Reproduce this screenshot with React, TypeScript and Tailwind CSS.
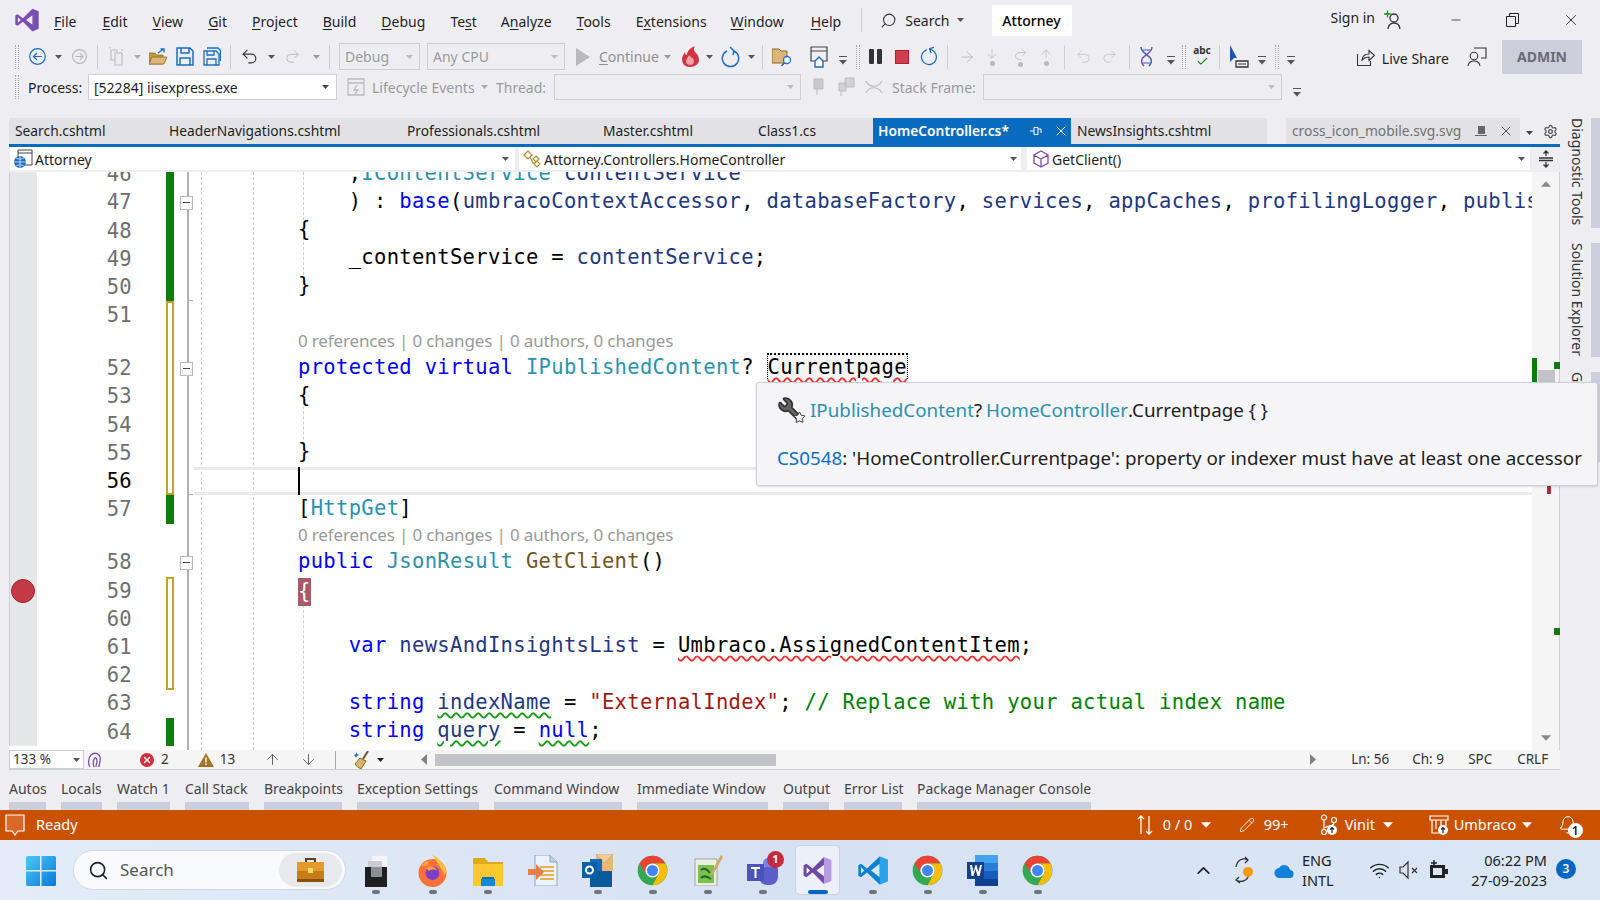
import { ArrowDown, ArrowRight, ArrowUp, ChevronUp, Check, Settings, Undo2, Redo2, RotateCw, Wifi, Search, Pencil, Bell, Wrench, Star, X, Minus } from "lucide-react";
import type { ReactNode } from "react";

const K = "text-[#0000ff]";
const T = "text-[#2b91af]";
const V = "text-[#1f377f]";
const M = "text-[#74531f]";
const S = "text-[#a31515]";
const C = "text-[#008000]";
const red = "underline decoration-wavy decoration-[#f03030] decoration-[1.5px] underline-offset-[3px]";
const green = "underline decoration-wavy decoration-[#1a9a1a] decoration-[1.5px] underline-offset-[3px]";

function Tri({ className = "ml-[8px]", color = "#555" }: { className?: string; color?: string }) {
  return (
    <svg width="7" height="4" viewBox="0 0 7 4" className={`shrink-0 ${className}`}>
      <path d="M0 0h7L3.5 4z" fill={color} />
    </svg>
  );
}

function Sep({ className = "" }: { className?: string }) {
  return <div className={`h-[24px] w-[1px] shrink-0 bg-[#ccced8] ${className}`} />;
}

function Grip({ className = "" }: { className?: string }) {
  return <div className={`h-[24px] w-[4px] shrink-0 border-x border-dotted border-[#a8a8b0] ${className}`} />;
}

function Overflow({ className = "" }: { className?: string }) {
  return (
    <svg width="8" height="10" viewBox="0 0 8 10" className={`shrink-0 ${className}`}>
      <path d="M0 1h8v1H0z" fill="#555" />
      <path d="M0 5h8L4 9.5z" fill="#555" />
    </svg>
  );
}

function VsLogo({ size = 26 }: { size?: number }) {
  return (
    <svg width={size} height={size} viewBox="0 0 24 24">
      <path fillRule="evenodd" fill="#7a4fb0" d="M17 1.5 8.2 10.4 3.4 6.8 1.2 7.900v8.200l2.200 1.100 4.800-3.600 8.800 8.900 5.800-2.400V3.900L17 1.500zM3.600 9.400 6.200 12l-2.600 2.600V9.400zM17 7.600v8.800L11.200 12 17 7.600z" />
    </svg>
  );
}

function MenuBar() {
  const items: [string, string, string, string][] = [
    ["", "F", "ile", "ml-[14px]"],
    ["", "E", "dit", "ml-[26px]"],
    ["", "V", "iew", "ml-[25px]"],
    ["", "G", "it", "ml-[25px]"],
    ["", "P", "roject", "ml-[25px]"],
    ["", "B", "uild", "ml-[25px]"],
    ["", "D", "ebug", "ml-[25px]"],
    ["Te", "s", "t", "ml-[25px]"],
    ["A", "n", "alyze", "ml-[24px]"],
    ["", "T", "ools", "ml-[25px]"],
    ["E", "x", "tensions", "ml-[25px]"],
    ["", "W", "indow", "ml-[24px]"],
    ["", "H", "elp", "ml-[27px]"],
  ];
  return (
    <div className="flex h-[40px] items-center pl-[14px] text-[14px] text-[#1e1e1e]">
      <VsLogo />
      {items.map(([a, u, b, m]) => (
        <span key={u + b} className={`${m} pt-[2px]`}>
          {a}
          <u className="underline-offset-2">{u}</u>
          {b}
        </span>
      ))}
      <Sep className="ml-[20px]" />
      <Search size={17} strokeWidth={1.5} className="ml-[18px] -scale-x-100 text-[#333]" />
      <span className="ml-[8px]">Search</span>
      <Tri className="ml-[7px]" />
      <div className="ml-[28px] flex h-[31px] w-[80px] items-center justify-center bg-white font-medium text-black">Attorney</div>
      <span className="ml-[259px] -mt-[6px]">Sign in</span>
      <svg width="20" height="20" viewBox="0 0 20 20" className="ml-[8px]" fill="none" stroke="#333" strokeWidth="1.3">
        <path d="M1 4h7M4.500 .5v7" stroke="#1a8a1a" />
        <circle cx="11" cy="8" r="4" />
        <path d="M5 19c.5-4 3-6 6-6s5.500 2 6 6" />
      </svg>
      <Minus size={14} strokeWidth={1.3} className="ml-[46px] text-[#222]" />
      <svg width="13" height="14" viewBox="0 0 13 14" className="ml-[43px]" fill="none" stroke="#222">
        <path d="M.5 3.500h9v10h-9zM3.500 3.500v-3h9v10h-3" />
      </svg>
      <X size={18} strokeWidth={1.2} className="ml-[43px] text-[#222]" />
    </div>
  );
}

function ToolbarOne() {
  return (
    <div className="flex h-[33px] items-center pl-[15px] text-[14px]">
      <Grip />
      <svg width="17" height="17" viewBox="0 0 17 17" className="ml-[10px] shrink-0" fill="none" stroke="#1c6dc4" strokeWidth="1.2">
        <circle cx="8.500" cy="8.500" r="7.800" />
        <path d="M13 8.500H4.500M8 5 4.500 8.500 8 12" />
      </svg>
      <Tri className="ml-[9px]" />
      <svg width="15" height="15" viewBox="0 0 17 17" className="ml-[10px] shrink-0" fill="none" stroke="#b4b4b8" strokeWidth="1.200">
        <circle cx="8.500" cy="8.500" r="7.800" />
        <path d="M4 8.500h8.500M9 5l3.500 3.500L9 12" />
      </svg>
      <Sep className="ml-[10px]" />
      <svg width="19" height="19" viewBox="0 0 19 19" className="ml-[10px] shrink-0" fill="none" stroke="#c0c0c4" strokeWidth="1.200">
        <path d="M7 6h7v12H7zM3 3h6v3M3 3v10h4M1 1h2M14 2v2" />
      </svg>
      <Tri className="ml-[7px]" color="#aaa" />
      <svg width="18" height="18" viewBox="0 0 18 18" className="ml-[8px] shrink-0">
        <path d="M0 5h6l1.500 2H14v9H0z" fill="#c59a3c" stroke="#8a6a20" strokeWidth=".8" />
        <path d="M3 9h15l-3 7H0z" fill="#dcb67a" stroke="#8a6a20" strokeWidth=".8" />
        <path d="M9 5 14 1.500M11.500 1H15v3.500" fill="none" stroke="#1c6dc4" strokeWidth="1.400" />
      </svg>
      <svg width="18" height="19" viewBox="0 0 18 19" className="ml-[9px] shrink-0" fill="none" stroke="#1c6dc4" strokeWidth="1.500">
        <path d="M1 1h13l3 3v14H1zM5 1v5h8V1M4 18v-7h10v7" />
      </svg>
      <svg width="18" height="19" viewBox="0 0 18 19" className="ml-[9px] shrink-0" fill="none" stroke="#1c6dc4" strokeWidth="1.300">
        <path d="M1 4h12l3 3v11H1zM4 4v4h7V4M4 18v-6h9v6M4 1h11l2.500 2.500V14" />
      </svg>
      <Sep className="ml-[9px]" />
      <Undo2 size={19} strokeWidth={1.4} className="ml-[9px] shrink-0 text-[#333]" />
      <Tri className="ml-[9px]" />
      <Redo2 size={17} strokeWidth={1.4} className="ml-[9px] shrink-0 text-[#bbb]" />
      <Tri className="ml-[12px]" color="#999" />
      <Sep className="ml-[9px]" />
      <div className="ml-[9px] flex h-[27px] w-[81px] shrink-0 items-center justify-between border border-[#ccced8] pl-[5px] pr-[6px] text-[#9a9a9a]">
        Debug
        <Tri className="" color="#bbb" />
      </div>
      <div className="ml-[7px] flex h-[27px] w-[138px] shrink-0 items-center justify-between border border-[#ccced8] pl-[5px] pr-[6px] text-[#9a9a9a]">
        Any CPU
        <Tri className="" color="#bbb" />
      </div>
      <svg width="14" height="18" viewBox="0 0 14 18" className="ml-[11px] shrink-0">
        <path d="M0 0l14 9-14 9z" fill="#b9b9bd" />
      </svg>
      <span className="ml-[9px] w-[59px] shrink-0 whitespace-nowrap text-[#8f8f8f]">
        <u className="underline-offset-2">C</u>ontinue
      </span>
      <Tri className="ml-[6px]" color="#999" />
      <svg width="19" height="22" viewBox="0 0 19 22" className="ml-[10px] shrink-0">
        <path d="M9 21c-5 0-8-3-8-8 0-3 2-5 3-7 0 2 1 3 2 3 0-4 3-7 8-9-2 3-1 5 1 7 2 2 3 4 3 7 0 4-4 7-9 7z" fill="#d4343f" />
        <path d="M9 19c-2 0-4-1.500-4-4s2-3 3-6c1 2 5 3 5 6s-2 4-4 4z" fill="#f3a3a8" />
      </svg>
      <Tri className="ml-[6px]" />
      <svg width="19" height="22" viewBox="0 0 19 22" className="ml-[8px] shrink-0" fill="none" stroke="#1c6dc4" strokeWidth="1.500">
        <path d="M6 5a8.200 8.200 0 1 0 7 0M9 1l4 4-1 4" />
      </svg>
      <Tri className="ml-[8px]" />
      <Sep className="ml-[7px]" />
      <svg width="21" height="20" viewBox="0 0 21 20" className="ml-[9px] shrink-0">
        <path d="M0 2h7l2 2h6v12H0z" fill="#dcb67a" stroke="#8a6a20" />
        <circle cx="15" cy="13" r="3.500" fill="#fff" stroke="#1c6dc4" strokeWidth="1.300" />
        <path d="M12.500 15.500 9.500 19" stroke="#1c6dc4" strokeWidth="1.500" />
      </svg>
      <svg width="18" height="22" viewBox="0 0 18 22" className="ml-[17px] shrink-0" fill="none" stroke="#444" strokeWidth="1.200">
        <path d="M1 1h16v14H1zM1 5h16" />
        <path d="M5 15l4-4 4 4v6H5z" fill="#fff" stroke="#1c6dc4" strokeWidth="1.400" />
      </svg>
      <Overflow className="ml-[11px] mt-[6px]" />
      <Grip className="ml-[9px]" />
      <div className="ml-[9px] flex h-[15px] w-[13px] shrink-0 justify-between">
        <div className="w-[5px] rounded-[1px] bg-[#333]" />
        <div className="w-[5px] rounded-[1px] bg-[#333]" />
      </div>
      <div className="ml-[13px] h-[14px] w-[14px] shrink-0 border border-[#b3202e] bg-[#cf3f4e]" />
      <RotateCw size={20} strokeWidth={1.500} className="ml-[10px] shrink-0 -scale-x-100 rotate-[70deg] text-[#1c6dc4]" />
      <Sep className="ml-[8px]" />
      <ArrowRight size={18} strokeWidth={1.200} className="ml-[10px] shrink-0 text-[#b9b9bd]" />
      <div className="ml-[12px] flex w-[8px] shrink-0 flex-col items-center">
        <ArrowDown size={14} strokeWidth={1.200} className="text-[#b9b9bd]" />
        <div className="h-[5px] w-[5px] rounded-full bg-[#b9b9bd]" />
      </div>
      <div className="ml-[16px] flex w-[16px] shrink-0 flex-col items-center">
        <Redo2 size={15} strokeWidth={1.200} className="text-[#b9b9bd]" />
        <div className="h-[5px] w-[5px] rounded-full bg-[#b9b9bd]" />
      </div>
      <div className="ml-[14px] flex w-[8px] shrink-0 flex-col items-center">
        <ArrowUp size={14} strokeWidth={1.200} className="text-[#b9b9bd]" />
        <div className="h-[5px] w-[5px] rounded-full bg-[#b9b9bd]" />
      </div>
      <Sep className="ml-[14px]" />
      <Undo2 size={17} strokeWidth={1.100} className="ml-[10px] shrink-0 text-[#c0c0c4]" />
      <Redo2 size={17} strokeWidth={1.100} className="ml-[9px] shrink-0 text-[#c0c0c4]" />
      <Sep className="ml-[11px]" />
      <svg width="17" height="22" viewBox="0 0 17 22" className="ml-[8px] shrink-0" fill="none" strokeWidth="1.500">
        <path d="M3 1c0 6 8 8 10 12 1 3-1 6-2 7" stroke="#3a5fc4" />
        <path d="M14 1c0 6-8 8-10 12-1 3 1 6 2 7" stroke="#7a4fb0" />
        <path d="M5 4h7M5 17h7" stroke="#3a5fc4" strokeWidth="1" />
      </svg>
      <Overflow className="ml-[12px] mt-[6px]" />
      <Grip className="ml-[7px]" />
      <div className="ml-[8px] flex w-[16px] shrink-0 flex-col items-center">
        <span className="text-[10px] font-bold leading-[10px] text-[#333]">abc</span>
        <Check size={13} strokeWidth={2} className="text-[#1a8a1a]" />
      </div>
      <Sep className="ml-[9px]" />
      <svg width="19" height="24" viewBox="0 0 19 24" className="ml-[10px] shrink-0">
        <path d="M0 0v17l4-4 3 0z" fill="#1c56b0" />
        <path d="M6 16h12v6H6z" fill="none" stroke="#333" strokeWidth="1.300" />
        <path d="M8 19h8" stroke="#333" />
      </svg>
      <Overflow className="ml-[9px] mt-[6px]" />
      <Grip className="ml-[9px]" />
      <Overflow className="ml-[8px] mt-[6px]" />
      <div className="ml-auto flex items-center">
        <svg width="18" height="18" viewBox="0 0 18 18" fill="none" stroke="#333" strokeWidth="1.100">
          <path d="M.5 6v11.500h13V13M5 12c.5-4 3-6 7-6V2.500l5.500 5-5.500 5V9c-3 0-5 1-7 3z" />
        </svg>
        <span className="ml-[7px] mt-[3px] text-[#1e1e1e]">Live Share</span>
        <svg width="20" height="20" viewBox="0 0 20 20" className="ml-[18px]" fill="none" stroke="#333" strokeWidth="1.100">
          <path d="M7 1h12v10h-5" />
          <circle cx="7" cy="9" r="3.800" />
          <path d="M1 19c.5-3.500 3-5 6-5s5.500 1.500 6 5" />
        </svg>
        <div className="ml-[15px] mr-[18px] flex h-[34px] w-[80px] items-center justify-center bg-[#cccedb] font-bold text-[#6b6b76]">ADMIN</div>
      </div>
    </div>
  );
}

function ToolbarTwo() {
  return (
    <div className="mb-[6px] mt-[1px] flex h-[26px] items-center pl-[15px] text-[14px]">
      <Grip />
      <span className="ml-[9px] w-[53px] shrink-0 text-[#1e1e1e]">Process:</span>
      <div className="ml-[7px] flex h-[26px] w-[249px] shrink-0 items-center justify-between border border-[#ccced8] bg-white pl-[5px] pr-[7px] text-[#1e1e1e]">
        [52284] iisexpress.exe
        <Tri className="" color="#444" />
      </div>
      <svg width="18" height="18" viewBox="0 0 18 18" className="ml-[10px] shrink-0" fill="none" stroke="#bcbcc0" strokeWidth="1.300">
        <path d="M1 1h16v16H1zM1 5h16M10 7 7 12h4l-3 4" />
      </svg>
      <span className="ml-[7px] w-[104px] shrink-0 whitespace-nowrap text-[#9a9a9a]">Lifecycle Events</span>
      <Tri className="ml-[5px]" color="#aaa" />
      <span className="ml-[8px] w-[49px] shrink-0 text-[#9a9a9a]">Thread:</span>
      <div className="ml-[9px] flex h-[26px] w-[247px] shrink-0 items-center justify-end border border-[#ccced8] pr-[6px]">
        <Tri className="" color="#bbb" />
      </div>
      <svg width="14" height="18" viewBox="0 0 14 18" className="ml-[12px] shrink-0">
        <path d="M1 1h9v10H1zM4 11v6" fill="#c9c9cd" stroke="#bcbcc0" />
      </svg>
      <svg width="17" height="20" viewBox="0 0 17 20" className="ml-[11px] shrink-0">
        <path d="M7 1h9v9H7zM1 6h7v8H1zM3 14v5" fill="#d3d3d6" stroke="#bcbcc0" />
      </svg>
      <svg width="18" height="14" viewBox="0 0 18 14" className="ml-[10px] shrink-0" fill="none" stroke="#bcbcc0" strokeWidth="1.200">
        <path d="M1 1c3 7 12 7 16 0M1 13c3-7 12-7 16 0" />
      </svg>
      <span className="ml-[9px] w-[83px] shrink-0 whitespace-nowrap text-[#9a9a9a]">Stack Frame:</span>
      <div className="ml-[8px] flex h-[26px] w-[299px] shrink-0 items-center justify-end border border-[#ccced8] pr-[6px]">
        <Tri className="" color="#bbb" />
      </div>
      <Overflow className="ml-[11px] mt-[9px]" />
    </div>
  );
}

function Tabs() {
  const tabs: [string, string][] = [
    ["Search.cshtml", "w-[154px]"],
    ["HeaderNavigations.cshtml", "w-[238px]"],
    ["Professionals.cshtml", "w-[196px]"],
    ["Master.cshtml", "w-[155px]"],
    ["Class1.cs", "w-[121px]"],
  ];
  return (
    <div className="flex h-[26px] items-center text-[13.800px] leading-[24px] text-[#1e1e1e]">
      {tabs.map(([name, w]) => (
        <div key={name} className={`flex h-full items-center bg-[#e2e2e4] pb-[1px] pl-[6px] ${w}`}>
          {name}
        </div>
      ))}
      <div className="flex h-full w-[198px] items-center bg-[#0a6cbe] pb-[1px] pl-[5px] font-semibold text-white">
        HomeController.cs*
        <svg width="12" height="12" viewBox="0 0 12 12" className="ml-[21px]" fill="none" stroke="#fff">
          <path d="M0 6h4M4 2.500h4v7H4zM8 4h3v4" />
        </svg>
        <X size={16} strokeWidth={1.500} className="ml-[11px]" />
      </div>
      <div className="flex h-full w-[196px] items-center bg-[#e2e2e4] pb-[1px] pl-[6px]">NewsInsights.cshtml</div>
      <div className="ml-[19px] flex h-full w-[234px] items-center bg-[#e2e2e4] pb-[1px] pl-[6px] text-[#707070]">
        cross_icon_mobile.svg.svg
        <svg width="12" height="12" viewBox="0 0 12 12" className="ml-auto">
          <path d="M3 1h7v8H3zM0 10h12v1H0z" fill="#666" />
        </svg>
        <X size={16} strokeWidth={1.500} className="ml-[11px] mr-[6px] text-[#555]" />
      </div>
      <Tri className="ml-[6px] mt-[4px]" color="#444" />
      <Settings size={15} className="ml-[10px] text-[#555]" />
    </div>
  );
}

function NavBar() {
  return (
    <div className="flex h-[25px] items-start bg-[#eeeef2] pl-[1px] text-[14px] text-[#1e1e1e]">
      <div className="flex h-[23px] w-[505px] items-center bg-white pl-[3px] pr-[6px]">
        <svg width="20" height="20" viewBox="0 0 20 20">
          <path d="M5 1h14v15H5zM5 4h14" fill="#fff" stroke="#444" />
          <circle cx="7" cy="13" r="6" fill="#1c6dc4" />
          <path d="M1 13h12M7 7v12M3 9c3 1.500 5 1.500 8 0M3 17c3-1.500 5-1.500 8 0" stroke="#fff" strokeWidth=".7" fill="none" />
        </svg>
        <span className="ml-[2px] mt-[1px]">Attorney</span>
        <Tri className="ml-auto" />
      </div>
      <div className="ml-[4px] flex h-[23px] w-[502px] items-center bg-white pl-[4px] pr-[4px]">
        <svg width="20" height="18" viewBox="0 0 20 18" fill="none" stroke="#b08a2e" strokeWidth="1.200">
          <path d="M1 5l4-4 4 4-4 4zM10 9l3-3 3 3-3 3zM11 14l3-3 3 3-3 3zM7 7l3 6h2" />
        </svg>
        <span className="ml-[1px] mt-[1px]">Attorney.Controllers.HomeController</span>
        <Tri className="ml-auto" />
      </div>
      <div className="ml-[6px] flex h-[23px] w-[503px] items-center bg-white pl-[6px] pr-[5px]">
        <svg width="16" height="18" viewBox="0 0 16 18" fill="none" stroke="#7a4fb0" strokeWidth="1.300">
          <path d="M8 1l7 4v8l-7 4-7-4V5zM1 5l7 4 7-4M8 9v8" />
        </svg>
        <span className="ml-[3px] mt-[1px]">GetClient()</span>
        <Tri className="ml-auto" />
      </div>
      <div className="ml-[8px] flex h-[23px] w-[16px] flex-col items-center justify-center text-[#333]">
        <svg width="14" height="18" viewBox="0 0 14 18" fill="none" stroke="#333" strokeWidth="1.300">
          <path d="M0 8h14M0 10.500h14M7 1v5M7 12v5M4.500 3.500 7 1l2.500 2.500M4.500 14.500 7 17l2.500-2.500" />
        </svg>
      </div>
    </div>
  );
}

type Bar = "green" | "yellow" | "yellowTop" | "yellowBottom" | "none";

function Row({ n, bar = "none", fold, current, children }: { n?: number; bar?: Bar; fold?: boolean; current?: boolean; children?: ReactNode }) {
  const barClass = {
    green: "bg-[#107c10]",
    yellow: "border-x-2 border-[#c4a02c]",
    yellowTop: "border-x-2 border-t-2 border-[#c4a02c]",
    yellowBottom: "border-x-2 border-b-2 border-[#c4a02c]",
    none: "",
  }[bar];
  return (
    <div className="relative flex h-[28.2px] shrink-0 items-center">
      {current && <div className="absolute inset-y-0 left-[185px] right-0 border-y-[3px] border-[#e9e9ef]" />}
      <div className="h-full w-[28px] shrink-0 border-l border-[#cccedb] bg-[#e6e7e8]" />
      <div className={`w-[95px] shrink-0 text-right ${current ? "text-black" : "text-[#6f6f6f]"}`}>{n}</div>
      <div className={`ml-[34px] h-full w-[8px] shrink-0 ${barClass}`} />
      <div className="relative z-10 ml-[6px] w-[13px] shrink-0">
        {fold && (
          <div className="flex h-[14px] w-[13px] items-center justify-center border border-[#b9b9b9] bg-white">
            <div className="h-[1px] w-[7px] bg-[#444]" />
          </div>
        )}
      </div>
      <div className={`relative ml-[105px] whitespace-pre text-black ${current ? "" : "-mt-[3px]"}`}>{children}</div>
    </div>
  );
}

function Lens({ bar = "none" }: { bar?: Bar }) {
  return (
    <div className="flex h-[25px] shrink-0 items-center">
      <div className="h-full w-[28px] shrink-0 border-l border-[#cccedb] bg-[#e6e7e8]" />
      <div className={`ml-[129px] h-full w-[8px] shrink-0 ${bar === "yellow" ? "border-x-2 border-[#c4a02c]" : ""}`} />
      <div className="-mt-[3px] ml-[124px] whitespace-pre font-['Noto_Sans'] text-[17px] tracking-[-0.15px] text-[#9a9a9a]">0 references | 0 changes | 0 authors, 0 changes</div>
    </div>
  );
}

function Editor() {
  return (
    <div className="relative flex h-[578px] overflow-hidden bg-white">
      <div className="relative min-w-0 flex-1 overflow-hidden font-['DejaVu_Sans_Mono'] text-[20.500px] tracking-[0.32px]">
        <div className="absolute bottom-0 left-[178px] top-0 w-[2px] bg-[#b0b0b0]" />
        <div className="absolute left-[178px] top-[128px] h-[1px] w-[6px] bg-[#b0b0b0]" />
        <div className="absolute left-[178px] top-[322px] h-[1px] w-[6px] bg-[#b0b0b0]" />
        <div className="absolute bottom-0 left-[192px] top-0 border-l border-dashed border-[#cfcfcf]" />
        <div className="absolute bottom-0 left-[244px] top-0 border-l border-dashed border-[#cfcfcf]" />
        <div className="absolute left-[294px] top-0 h-[118px] border-l border-dashed border-[#cfcfcf]" />
        <div className="absolute left-[294px] top-[224px] h-[64px] border-l border-dashed border-[#cfcfcf]" />
        <div className="absolute bottom-0 left-[294px] top-[433px] border-l border-dashed border-[#cfcfcf]" />
        <div className="relative -mt-[11.600px] flex flex-col">
          <Row n={46} bar="green">
            {"    ,"}
            <span className={T}>IContentService</span> <span className={V}>contentService</span>
          </Row>
          <Row n={47} bar="green" fold>
            {"    ) : "}
            <span className={K}>base</span>(<span className={V}>umbracoContextAccessor</span>, <span className={V}>databaseFactory</span>, <span className={V}>services</span>, <span className={V}>appCaches</span>, <span className={V}>profilingLogger</span>, <span className={V}>publishedSnapshot</span>)
          </Row>
          <Row n={48} bar="green">{"{"}</Row>
          <Row n={49} bar="green">
            {"    _contentService = "}
            <span className={V}>contentService</span>;
          </Row>
          <Row n={50} bar="green">{"}"}</Row>
          <Row n={51} bar="yellowTop" />
          <Lens bar="yellow" />
          <Row n={52} bar="yellow" fold>
            <span className={K}>protected</span> <span className={K}>virtual</span> <span className={T}>IPublishedContent</span>? <span className={`border-x border-t-2 border-dotted border-black bg-[#f4f4f4] ${red}`}>Currentpage</span>
          </Row>
          <Row n={53} bar="yellow">{"{"}</Row>
          <Row n={54} bar="yellow" />
          <Row n={55} bar="yellow">{"}"}</Row>
          <Row n={56} bar="yellowBottom" current>
            <div className="h-[28px] w-[2px] bg-black" />
          </Row>
          <Row n={57} bar="green">
            [<span className={T}>HttpGet</span>]
          </Row>
          <Lens />
          <Row n={58} fold>
            <span className={K}>public</span> <span className={T}>JsonResult</span> <span className={M}>GetClient</span>()
          </Row>
          <Row n={59} bar="yellowTop">
            <span className="relative top-[1.500px] inline-block h-[28px] bg-[#ad5a68] leading-[26px] text-white">{"{"}</span>
          </Row>
          <Row n={60} bar="yellow" />
          <Row n={61} bar="yellow">
            {"    "}
            <span className={K}>var</span> <span className={V}>newsAndInsightsList</span> = <span className={red}>Umbraco.AssignedContentItem</span>;
          </Row>
          <Row n={62} bar="yellowBottom" />
          <Row n={63}>
            {"    "}
            <span className={K}>string</span> <span className={`${V} ${green}`}>indexName</span> = <span className={S}>"ExternalIndex"</span>; <span className={C}>// Replace with your actual index name</span>
          </Row>
          <Row n={64} bar="green">
            {"    "}
            <span className={K}>string</span> <span className={`${V} ${green}`}>query</span> = <span className={`${K} ${green}`}>null</span>;
          </Row>
        </div>
        <div className="absolute left-[2px] top-[407px] h-[24px] w-[24px] rounded-full border border-[#a3202e] bg-[#c53a47]" />
      </div>
      <div className="relative w-[28px] shrink-0 border-r border-[#cccedb] bg-[#f5f5f5]">
        <Tri className="absolute left-[9px] top-[9px] h-[6px] w-[10px] rotate-180" color="#888" />
        <Tri className="absolute bottom-[9px] left-[9px] h-[6px] w-[10px]" color="#888" />
        <div className="absolute left-0 top-[186px] h-[24px] w-[5px] bg-[#107c10]" />
        <div className="absolute left-[22px] top-[190px] h-[7px] w-[6px] bg-[#107c10]" />
        <div className="absolute left-[6px] top-[198px] h-[40px] w-[17px] bg-[#c2c3c9]" />
        <div className="absolute left-[15px] top-[314px] h-[8px] w-[4px] bg-[#a1303c]" />
        <div className="absolute left-[22px] top-[456px] h-[7px] w-[6px] bg-[#107c10]" />
      </div>
    </div>
  );
}

function EditorStatus() {
  return (
    <div className="flex h-[20px] items-center border-b border-[#cccedb] bg-[#f5f5f5] text-[13.500px] text-[#333]">
      <div className="flex h-full w-[75px] shrink-0 items-center justify-between border border-[#cccedb] bg-white pl-[3px] pr-[3px]">
        133 %
        <Tri className="" />
      </div>
      <svg width="15" height="16" viewBox="0 0 15 16" className="ml-[3px] shrink-0" fill="none" stroke="#7a4fb0" strokeWidth="1.300">
        <path d="M3 15c-2-3-2-9 1-12 3-3 8-2 9 2 1 4-1 6-1 10M7 15c-1-3-1-7 1-9 1-1 2 1 2 3s-1 3-1 6" />
      </svg>
      <div className="ml-[38px] flex h-[14px] w-[14px] shrink-0 items-center justify-center rounded-full bg-[#d12f3d]">
        <X size={10} strokeWidth={3} className="text-white" />
      </div>
      <span className="ml-[7px]">2</span>
      <svg width="16" height="14" viewBox="0 0 16 14" className="ml-[29px] shrink-0">
        <path d="M8 0l8 14H0z" fill="#a5741f" />
        <path d="M7.300 4.500h1.400v5H7.300zM7.300 10.500h1.400V12H7.300z" fill="#fff" />
      </svg>
      <span className="ml-[6px]">13</span>
      <ArrowUp size={17} strokeWidth={1.300} className="ml-[29px] shrink-0 text-[#555]" />
      <ArrowDown size={17} strokeWidth={1.300} className="ml-[19px] shrink-0 text-[#555]" />
      <div className="ml-[18px] h-[18px] w-[1px] shrink-0 bg-[#a8a8a8]" />
      <svg width="17" height="18" viewBox="0 0 17 18" className="ml-[18px] shrink-0">
        <path d="M14 0 9 8" stroke="#6b5a2e" strokeWidth="2" />
        <path d="M6 7l6 3-5 8c-2-1-5-3-6-5z" fill="#d7b56d" stroke="#8a6a20" />
        <path d="M2 1l1 2 2 1-2 1-1 2-1-2-1-1 2-1z" fill="#1c6dc4" />
      </svg>
      <Tri className="ml-[6px]" color="#222" />
      <svg width="6" height="11" viewBox="0 0 6 11" className="ml-[37px] shrink-0">
        <path d="M6 0v11L0 5.500z" fill="#80808a" />
      </svg>
      <div className="ml-[8px] h-[12px] w-[341px] shrink-0 bg-[#c2c3c9]" />
      <svg width="6" height="11" viewBox="0 0 6 11" className="ml-[534px] shrink-0">
        <path d="M0 0v11l6-5.500z" fill="#80808a" />
      </svg>
      <span className="ml-[35px] w-[61px] shrink-0">Ln: 56</span>
      <span className="w-[56px] shrink-0">Ch: 9</span>
      <span className="w-[49px] shrink-0">SPC</span>
      <span className="shrink-0">CRLF</span>
    </div>
  );
}

function SideTabs() {
  return (
    <div className="flex w-[40px] shrink-0 flex-col gap-[15px] pl-[7px] pt-[12px] text-[14px] text-[#333]">
      <div className="flex h-[110px] justify-between">
        <span className="whitespace-nowrap [writing-mode:vertical-rl]">Diagnostic Tools</span>
        <div className="w-[9px] bg-[#cccedb]" />
      </div>
      <div className="flex h-[114px] justify-between">
        <span className="whitespace-nowrap [writing-mode:vertical-rl]">Solution Explorer</span>
        <div className="w-[9px] bg-[#cccedb]" />
      </div>
      <div className="flex h-[90px] justify-between">
        <span className="whitespace-nowrap [writing-mode:vertical-rl]">Git Changes</span>
        <div className="w-[9px] bg-[#cccedb]" />
      </div>
    </div>
  );
}

function BottomTabs() {
  const tabs: [string, string][] = [
    ["Autos", "w-[37px]"],
    ["Locals", "w-[41px]"],
    ["Watch 1", "w-[53px]"],
    ["Call Stack", "w-[64px]"],
    ["Breakpoints", "w-[78px]"],
    ["Exception Settings", "w-[122px]"],
    ["Command Window", "w-[128px]"],
    ["Immediate Window", "w-[131px]"],
    ["Output", "w-[46px]"],
    ["Error List", "w-[58px]"],
    ["Package Manager Console", "w-[174px]"],
  ];
  return (
    <div className="flex h-[40px] gap-[15px] pl-[9px] text-[14px] text-[#444]">
      {tabs.map(([name, w]) => (
        <div key={name} className={`flex h-full flex-col justify-end ${w}`}>
          <span className="whitespace-nowrap pb-[3px]">{name}</span>
          <div className="h-[8px] w-full bg-[#cccedb]" />
        </div>
      ))}
    </div>
  );
}

function StatusBar() {
  return (
    <div className="flex h-[30px] items-center bg-[#ca5100] pl-[5px] text-[14.500px] text-white">
      <svg width="20" height="22" viewBox="0 0 20 22" className="shrink-0">
        <path d="M1 1h18v16h-6l-3 4-3-4H1z" fill="#d9692a" stroke="#fff" strokeWidth="1.200" />
      </svg>
      <span className="ml-[11px]">Ready</span>
      <svg width="16" height="20" viewBox="0 0 16 20" className="ml-[1059px] shrink-0" fill="none" stroke="#fff" strokeWidth="1.300">
        <path d="M4 19V1M1 4l3-3 3 3M12 1v18M9 16l3 3 3-3" />
      </svg>
      <span className="ml-[10px] w-[30px] shrink-0 whitespace-nowrap">0 / 0</span>
      <Tri className="ml-[8px] h-[6px] w-[10px]" color="#fff" />
      <Pencil size={16} strokeWidth={1.300} className="ml-[28px] shrink-0 -scale-x-100 rotate-90" />
      <span className="ml-[9px] w-[26px] shrink-0">99+</span>
      <svg width="18" height="22" viewBox="0 0 18 22" className="ml-[30px] shrink-0" fill="none" stroke="#fff" strokeWidth="1.200">
        <circle cx="4" cy="3.500" r="2.500" />
        <circle cx="14" cy="6" r="2.500" />
        <circle cx="4" cy="18" r="2.500" />
        <path d="M4 6v9.500M14 8.500c0 4-6 3-9 5" />
        <circle cx="12" cy="16" r="5" fill="#fff" stroke="none" />
        <path d="M12 19v-5M10 15.500l2-2 2 2" stroke="#222" />
      </svg>
      <span className="ml-[7px] w-[32px] shrink-0">Vinit</span>
      <Tri className="ml-[6px] h-[6px] w-[10px]" color="#fff" />
      <svg width="20" height="22" viewBox="0 0 20 22" className="ml-[36px] shrink-0" fill="none" stroke="#fff" strokeWidth="1.200">
        <path d="M1 2h18v4H1zM3 6v13h7M17 6v6M7 6v9M12 6v6" />
        <circle cx="14" cy="16" r="5" fill="#fff" stroke="none" />
        <path d="M14 19v-5M12 15.500l2-2 2 2" stroke="#222" />
      </svg>
      <span className="ml-[5px] w-[60px] shrink-0">Umbraco</span>
      <Tri className="ml-[8px] h-[6px] w-[10px]" color="#fff" />
      <div className="relative ml-[26px] shrink-0">
        <Bell size={20} strokeWidth={1.200} />
        <div className="absolute -bottom-[3px] left-[10px] flex h-[15px] w-[15px] items-center justify-center rounded-full bg-white text-[12px] font-semibold text-[#222]">1</div>
      </div>
    </div>
  );
}

function Chrome() {
  return (
    <svg width="31" height="33" viewBox="0 0 48 48">
      <circle cx="24" cy="24" r="23" fill="#34a853" />
      <path d="M24 1A23 23 0 0 1 44 13H24a11 11 0 0 0-9.500 16.500L4 13A23 23 0 0 1 24 1z" fill="#ea4335" />
      <path d="M44 13A23 23 0 0 1 24 47L33.500 29.500A11 11 0 0 0 24 13z" fill="#fbbc04" />
      <circle cx="24" cy="24" r="11" fill="#fff" />
      <circle cx="24" cy="24" r="8.500" fill="#4285f4" />
    </svg>
  );
}

function TaskIcon({ children, width = "w-[55px]", dot = true, active }: { children: ReactNode; width?: string; dot?: boolean; active?: boolean }) {
  return (
    <div className={`flex h-full shrink-0 flex-col items-center pt-[14px] ${width} ${active ? "relative" : ""}`}>
      {active && <div className="absolute left-[5px] top-[5px] h-[50px] w-[45px] rounded-[5px] border border-[#ccd3e0] bg-white/50" />}
      <div className="relative flex h-[33px] items-center justify-center">{children}</div>
      {dot && <div className={`relative mt-[3px] h-[4px] rounded-full ${active ? "w-[20px] bg-[#0067c0]" : "w-[8px] bg-[#70747c]"}`} />}
    </div>
  );
}

function Taskbar() {
  return (
    <div className="flex h-[60px] items-start bg-gradient-to-r from-[#e3ecf8] via-[#d6e1f3] to-[#dbe6f5] text-[#222]">
      <svg width="30" height="30" viewBox="0 0 30 30" className="ml-[26px] mt-[16px] shrink-0">
        <defs>
          <linearGradient id="win" x1="0" y1="0" x2="1" y2="1">
            <stop offset="0" stopColor="#4cc8f8" />
            <stop offset="1" stopColor="#0a78d8" />
          </linearGradient>
        </defs>
        <path d="M0 1.500A1.500 1.500 0 0 1 1.500 0H14v14H0zM15.500 0H28.500A1.500 1.500 0 0 1 30 1.500V14H15.500zM0 15.500h14V30H1.500A1.500 1.500 0 0 1 0 28.500zM15.500 15.500H30V28.500A1.500 1.500 0 0 1 28.500 30H15.500z" fill="url(#win)" />
      </svg>
      <div className="ml-[17px] mt-[10px] flex h-[40px] w-[273px] shrink-0 items-center rounded-full border border-[#d3d9e4] bg-[#f8fafd] pl-[14px]">
        <Search size={21} strokeWidth={1.800} className="text-[#222]" />
        <span className="ml-[11px] text-[17px] text-[#555]">Search</span>
        <div className="ml-auto mr-[3px] flex h-[34px] w-[63px] items-center justify-center rounded-full bg-[#e8e9ec]">
          <svg width="29" height="26" viewBox="0 0 29 26">
            <path d="M10 5V2h9v3" fill="none" stroke="#5b4020" strokeWidth="2" />
            <path d="M1 5h27v20H1z" fill="#c77d17" />
            <path d="M1 5h27v9H1z" fill="#e39a2d" />
            <path d="M1 22h27v3H1z" fill="#8a4f0f" />
            <path d="M12 11h5v5h-5z" fill="#f8d86a" />
          </svg>
        </div>
      </div>
      <TaskIcon width="w-[59px]">
        <svg width="24" height="32" viewBox="0 0 24 32">
          <path d="M7 0h17v20H7z" fill="#f3f4f7" stroke="#d9dbe0" />
          <path d="M4 6h14v16H4z" fill="#c9ccd2" />
          <path d="M1 12h22v20H1z" fill="#1f1f20" />
          <path d="M7 12h11v10H7z" fill="#8c8e92" />
        </svg>
      </TaskIcon>
      <TaskIcon>
        <svg width="29" height="34" viewBox="0 0 29 34">
          <circle cx="14.500" cy="19" r="14" fill="#ff7139" />
          <path d="M14 0c4 3 9 6 13 13 1 3 1 6 0 8L19 8z" fill="#ffc13a" />
          <path d="M3 12c2-3 5-5 8-5l-2 5z" fill="#ffa436" />
          <circle cx="14.500" cy="19" r="7" fill="#7b3fc4" />
          <path d="M8 14c4-3 10-2 11 3-2-2-6-2-8 0z" fill="#ff9640" />
        </svg>
      </TaskIcon>
      <TaskIcon>
        <svg width="30" height="30" viewBox="0 0 30 30">
          <path d="M0 2h12l3 4h15v4H0z" fill="#e0a81c" />
          <path d="M0 8h30v22H0z" fill="#fcc82e" />
          <path d="M9 21h12v2H9z" fill="#0a6cbe" />
          <path d="M8 23h14v7H8z" fill="#1688d8" />
        </svg>
      </TaskIcon>
      <TaskIcon dot={false}>
        <svg width="30" height="31" viewBox="0 0 30 31">
          <path d="M7 0h15l7 7v24H7z" fill="#eaf2fb" stroke="#88a7c4" />
          <path d="M22 0v7h7" fill="#b9d3ea" stroke="#88a7c4" />
          <path d="M12 12h14M12 16h14M12 20h14M12 24h14" stroke="#e7b04a" strokeWidth="2" />
          <path d="M0 14h8V9l8 8-8 8v-5H0z" fill="#e6804a" />
        </svg>
      </TaskIcon>
      <TaskIcon>
        <svg width="31" height="33" viewBox="0 0 31 33">
          <path d="M14 0h17v17H14z" fill="#e6b87a" />
          <path d="M14 0l8.500 9L31 0z" fill="#f0cd9b" stroke="#c99a5e" strokeWidth=".5" />
          <path d="M8 5h12v24H8z" fill="#0f6cbd" />
          <path d="M8 17h22v16H8z" fill="#0a5a9e" />
          <path d="M0 8h15v16H0z" fill="#0b5fa5" />
          <circle cx="7.500" cy="16" r="3.500" fill="none" stroke="#fff" strokeWidth="2" />
        </svg>
      </TaskIcon>
      <TaskIcon>
        <Chrome />
      </TaskIcon>
      <TaskIcon>
        <svg width="30" height="31" viewBox="0 0 30 31">
          <path d="M2 4h22v27H2z" fill="#e9f0e4" stroke="#9ca89a" />
          <path d="M5 10h16v18H5z" fill="#7fc04a" />
          <path d="M8 15c3-3 7 0 9 3M8 23c3-3 6-2 10 1" stroke="#1c6a28" strokeWidth="2" fill="none" />
          <path d="M28 0 19 16l-2 5 4-3L30 2z" fill="#d2a860" />
        </svg>
      </TaskIcon>
      <TaskIcon>
        <svg width="31" height="30" viewBox="0 0 31 30">
          <circle cx="21" cy="7" r="5" fill="#7b83eb" />
          <path d="M12 11h17a2 2 0 0 1 2 2v8a8 8 0 0 1-8 8h-3a8 8 0 0 1-8-8z" fill="#5b5fc7" />
          <path d="M0 8h17v17H0z" fill="#4b53bc" />
          <path d="M4 11h9v2H9.500v9h-2v-9H4z" fill="#fff" />
        </svg>
        <div className="absolute -right-[6px] -top-[3px] flex h-[17px] w-[17px] items-center justify-center rounded-full bg-[#c42b3c] text-[11px] font-bold text-white">1</div>
      </TaskIcon>
      <TaskIcon active>
        <svg width="31" height="33" viewBox="0 0 24 24">
          <path d="M17 1.500 8.200 10.400 3.400 6.800 1.200 7.900v8.200l2.200 1.100 4.800-3.600 8.800 8.900V16.400L11.200 12 17 7.600z" fill="#6e4aa5" />
          <path d="M17 1.500 22.800 3.900v16.200L17 22.500z" fill="#b79be2" />
          <path d="M3.600 9.400 6.200 12l-2.600 2.600z" fill="#fff" />
        </svg>
      </TaskIcon>
      <TaskIcon>
        <svg width="32" height="33" viewBox="0 0 24 24">
          <path d="M17 1.500 7.500 10.500 3 7 1 8v8l2 1 4.500-3.500 9.500 9 6-2.500V4z" fill="#0f7fd0" />
          <path d="M17 7 10.500 12 17 17z" fill="#dbe6f5" />
          <path d="M3 9.500 5.500 12 3 14.500z" fill="#dbe6f5" />
          <path d="M17 1.500 23 4v16l-6 2.500z" fill="#29a3ec" />
        </svg>
      </TaskIcon>
      <TaskIcon>
        <Chrome />
      </TaskIcon>
      <TaskIcon>
        <svg width="31" height="31" viewBox="0 0 31 31">
          <path d="M8 0h23v8H8z" fill="#41a5ee" />
          <path d="M8 8h23v8H8z" fill="#2b7cd3" />
          <path d="M8 16h23v8H8z" fill="#185abd" />
          <path d="M8 24h23v7H8z" fill="#103f91" />
          <path d="M0 7h17v17H0z" fill="#15408e" />
          <path d="M3 10h2l1.500 7 2-7h1l2 7L13 10h2l-2.500 11h-2L8.500 14l-2 7h-2z" fill="#fff" />
        </svg>
      </TaskIcon>
      <TaskIcon>
        <Chrome />
      </TaskIcon>
      <ChevronUp size={21} strokeWidth={2} className="ml-[128px] mt-[20px] shrink-0" />
      <svg width="21" height="32" viewBox="0 0 21 32" className="ml-[19px] mt-[15px] shrink-0" fill="none" stroke="#333" strokeWidth="1.300">
        <path d="M3 12C4 5 10 2 15 5M12 2l3 3-3 3M16 20c-2 6-8 8-13 5M7 28l-4-3 3-3" />
        <circle cx="15" cy="17" r="5" fill="#f59a0c" stroke="none" />
      </svg>
      <svg width="21" height="15" viewBox="0 0 21 15" className="ml-[19px] mt-[23px] shrink-0">
        <path d="M7 15a5 5 0 0 1-1-10 6 6 0 0 1 11 2 4 4 0 0 1-1 8z" fill="#1080d8" />
      </svg>
      <div className="ml-[8px] mt-[10px] w-[32px] shrink-0 text-[14.500px] leading-[20px]">
        ENG
        <br />
        INTL
      </div>
      <Wifi size={21} strokeWidth={1.700} className="ml-[35px] mt-[20px] shrink-0" />
      <svg width="20" height="20" viewBox="0 0 20 20" className="ml-[9px] mt-[20px] shrink-0" fill="none" stroke="#333" strokeWidth="1.200">
        <path d="M1 7v6h3l5 5V2L4 7zM13 8l5 5M18 8l-5 5" />
      </svg>
      <svg width="20" height="22" viewBox="0 0 20 22" className="ml-[10px] mt-[19px] shrink-0">
        <path d="M1 6h15v13H1zM16 10h3v5h-3z" fill="#222" />
        <path d="M4 9h9v7H4z" fill="#dbe6f5" />
        <path d="M5 1v6M2 4h6" stroke="#222" strokeWidth="1.500" />
      </svg>
      <div className="ml-[8px] mt-[10px] w-[90px] shrink-0 whitespace-nowrap text-right text-[14.500px] leading-[20px]">
        06:22 PM
        <br />
        27-09-2023
      </div>
      <div className="ml-[9px] mt-[19px] flex h-[20px] w-[20px] shrink-0 items-center justify-center rounded-full bg-[#0067c0] text-[12px] font-semibold text-white">3</div>
    </div>
  );
}

function Tooltip() {
  return (
    <div className="absolute left-[756px] top-[382px] flex h-[104px] w-[842px] flex-col rounded-[3px] border border-[#cccedb] bg-[#f5f5f7] pl-[20px] text-[18.800px] text-[#1e1e1e] shadow-sm">
      <div className="mt-[13px] flex h-[28px] items-center whitespace-nowrap">
        <div className="relative h-[28px] w-[33px] shrink-0">
          <Wrench size={26} strokeWidth={1.600} className="-scale-x-100 fill-[#666] text-[#333]" />
          <Star size={13} strokeWidth={1.800} className="absolute bottom-0 right-[4px] fill-[#f5f5f7] text-[#333]" />
        </div>
        <span className={T}>IPublishedContent</span>? <span className={`ml-[4px] ${T}`}>HomeController</span>.Currentpage {"{ }"}
      </div>
      <div className="mt-[20px] whitespace-nowrap">
        <span className="text-[#0e70c0]">CS0548</span>: 'HomeController.Currentpage': property or indexer must have at least one accessor
      </div>
    </div>
  );
}

export default function App() {
  return (
    <div className="relative flex h-[900px] w-[1600px] flex-col overflow-hidden bg-[#eeeef2] font-['Noto_Sans',sans-serif]">
      <MenuBar />
      <ToolbarOne />
      <ToolbarTwo />
      <div className="flex h-[664px]">
        <div className="ml-[9px] flex w-[1551px] shrink-0 flex-col pt-[12px]">
          <Tabs />
          <div className="h-[3px] bg-[#0a6cbe]" />
          <NavBar />
          <Editor />
          <EditorStatus />
        </div>
        <SideTabs />
      </div>
      <BottomTabs />
      <StatusBar />
      <Taskbar />
      <Tooltip />
    </div>
  );
}
